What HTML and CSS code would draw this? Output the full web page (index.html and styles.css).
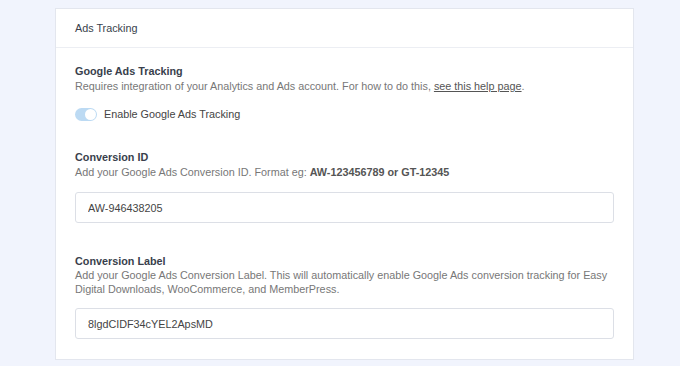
FILE: index.html
```html
<!DOCTYPE html>
<html lang="en">
<head>
    <meta charset="UTF-8">
    <meta name="viewport" content="width=device-width, initial-scale=1.0">
    <title>Ads Tracking</title>
    <link rel="stylesheet" href="styles.css">
</head>
<body>

    <div class="panel">
        <div class="panel-header">Ads Tracking</div>

        <div class="panel-body">
            <div class="setting">
                <div class="setting-title">Google Ads Tracking</div>
                <div class="setting-desc">Requires integration of your Analytics and Ads account. For how to do this, <a href="#">see this help page</a>.</div>
                <label class="toggle-row">
                    <span class="toggle on"><span class="knob"></span></span>
                    Enable Google Ads Tracking
                </label>
            </div>

            <div class="setting">
                <div class="setting-title">Conversion ID</div>
                <div class="setting-desc">Add your Google Ads Conversion ID. Format eg: <strong>AW-123456789 or GT-12345</strong></div>
                <input type="text" class="field" value="AW-946438205">
            </div>

            <div class="setting">
                <div class="setting-title">Conversion Label</div>
                <div class="setting-desc">Add your Google Ads Conversion Label. This will automatically enable Google Ads conversion tracking for Easy Digital Downloads, WooCommerce, and MemberPress.</div>
                <input type="text" class="field" value="8lgdCIDF34cYEL2ApsMD">
            </div>
        </div>
    </div>

</body>
</html>
```

FILE: styles.css
```css
body {
    font-family: "Liberation Sans", Arial, sans-serif;
    font-size: 10.8px;
    color: #393f4c;
    background-color: #f1f4fd;
    margin: 0;
    padding: 8px 46px 0 55px;
}

.panel {
    background-color: white;
    border: 1px solid #e3e6ee;
}

.panel-header {
    height: 38px;
    line-height: 38px;
    padding: 0 19px;
    border-bottom: 1px solid #eceef3;
    color: #393f4c;
}

.panel-body {
    padding: 16px 19px 20px;
}

.setting {
    margin-bottom: 29px;
}

.setting:nth-child(2) {
    margin-bottom: 31px;
}

.setting:last-child {
    margin-bottom: 0;
}

.setting-title {
    font-weight: bold;
    line-height: 15px;
    color: #393f4c;
}

.setting-desc {
    line-height: 14px;
    color: #777;
}

.setting-desc a {
    color: #555;
}

.setting-desc strong {
    color: #555;
}

.toggle-row {
    display: flex;
    align-items: center;
    gap: 7px;
    margin-top: 14px;
    color: #444;
    line-height: 14px;
}

.toggle {
    position: relative;
    width: 22px;
    height: 13px;
    border-radius: 7px;
    background-color: #bcdaf3;
}

.toggle .knob {
    position: absolute;
    top: 1px;
    right: 1px;
    width: 11px;
    height: 11px;
    border-radius: 50%;
    background-color: white;
}

.field {
    display: block;
    box-sizing: border-box;
    width: 100%;
    height: 31px;
    margin-top: 13px;
    padding: 0 12px;
    border: 1px solid #dcdfe6;
    border-radius: 3px;
    font-family: "Liberation Sans", Arial, sans-serif;
    font-size: 10.8px;
    color: #444;
}

.setting:last-child .setting-title {
    line-height: 14px;
}

.setting:last-child .setting-desc {
    margin-bottom: -1px;
}
```
